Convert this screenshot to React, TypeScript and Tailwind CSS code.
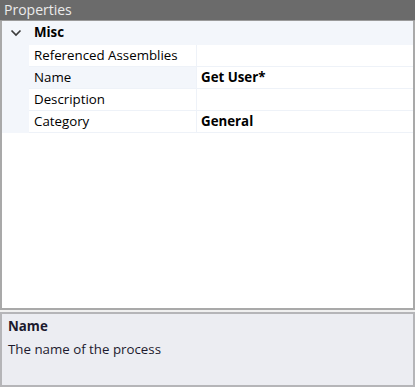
const rows = [
  { label: "Referenced Assemblies", value: "" },
  { label: "Name", value: "Get User*", selected: true },
  { label: "Description", value: "" },
  { label: "Category", value: "General" },
];

const App = () => {
  return (
    <div
      className="w-[415px] h-[387px] flex flex-col bg-[#f0f0f0] text-[13.3px] text-black"
      style={{ fontFamily: "'Open Sans', 'Noto Sans', sans-serif" }}
    >
      {/* Title */}
      <div className="h-[21px] bg-[#6b6b6b] text-[#ececec] text-[14px] leading-[20px] pl-[4px] border-b border-[#9a9a9a]">
        Properties
      </div>

      {/* Grid */}
      <div className="flex-1 bg-white border-x-2 border-b-2 border-[#a9a9a9] border-t-0 flex flex-col">
        <div className="h-[24px] bg-[#f3f6fb] flex items-center">
          <div className="w-[28px] flex justify-center">
            <svg width="12" height="8" viewBox="0 0 12 8">
              <path d="M1.5 1.5 L6 6 L10.5 1.5" stroke="#3c3c3c" strokeWidth="1.7" fill="none" />
            </svg>
          </div>
          <div className="font-bold pl-[4px]">Misc</div>
        </div>
        {rows.map((r) => (
          <div key={r.label} className="flex h-[22px] bg-[#f3f6fb]">
            <div className="w-[27px]" />
            <div
              className={
                "w-[168px] pl-[5px] leading-[21px] border-b border-r border-[#eef2f8] whitespace-nowrap " +
                (r.selected ? "bg-[#f3f6fb]" : "bg-white")
              }
            >
              {r.label}
            </div>
            <div className="flex-1 bg-white pl-[4px] font-bold leading-[21px] border-b border-[#eef2f8]">
              {r.value}
            </div>
          </div>
        ))}
      </div>

      {/* Description pane */}
      <div className="h-[75px] mt-[2px] bg-[#ecedf2] border-2 border-[#b5b5b8] px-[6px] pt-[3px] text-[#1c1a2e]">
        <div className="font-bold leading-[19px]">Name</div>
        <div className="leading-[22px] mt-[2px]">The name of the process</div>
      </div>
    </div>
  );
};

export default App;
